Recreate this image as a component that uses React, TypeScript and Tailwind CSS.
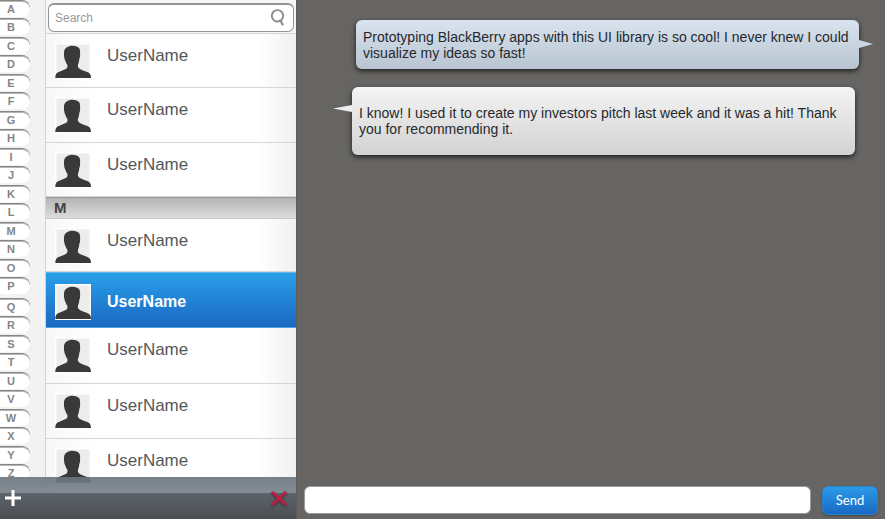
import React, { useState } from 'react';

const letterGroups = ['ABCDEFGHIJKLMNOP', 'QRSTUVWXYZ'];

const Avatar: React.FC<{ selected?: boolean }> = ({ selected }) => (
  <svg
    viewBox="0 0 36 36"
    className={`w-9 h-9 shrink-0 ${selected ? 'mt-[11px]' : 'mt-[9px]'}`}
    aria-hidden="true"
  >
    <rect width="36" height="36" fill="#ffffff" />
    <rect x="1.5" y="1.5" width="33" height="33" fill="#ececec" />
    <path
      d="M17.5 2.800C13 2.800 9.300 5 9 9.200c-.2 1.600 0 3 .1 4.300.2 1.500.5 3 1.200 4.200.5 1.600 1.200 3 2.100 4.200.2 1.800.1 3-1.300 3.900-2.300 1.500-6.300 2.600-8.900 4C.9 30.900.3 32.500.3 35H36c-.1-2.400-.6-4.300-2.200-5.300-2.600-1.400-6.300-2.300-9-3.800-1.500-.9-2-1.800-1.900-3.300 0-1.100.5-2 .9-3.300.3-1 .3-2.200.5-3.400.6-1.100.9-2.500.8-4.200 0-2.100.2-4.500-.7-6.200C23 3.800 20.500 2.800 17.500 2.800z"
      fill="#393939"
    />
  </svg>
);

type ContactProps = {
  selected?: boolean;
  className?: string;
};

const Contact: React.FC<ContactProps> = ({ selected = false, className = 'h-[55px]' }) => (
  <li className={className}>
    <button
      type="button"
      aria-pressed={selected}
      className={`flex w-full h-full items-start gap-4 pl-[9px] text-left border-b ${
        selected
          ? 'bg-linear-to-b from-[#2a9fea] to-[#1b68c1] border-[#4d9fe0] border-t border-t-[#63b3e6] text-white font-bold text-base'
          : 'border-[#d3d6d8] text-[#55585b] text-[17px]'
      }`}
    >
      <Avatar selected={selected} />
      <span className={selected ? 'mt-[19px] leading-5' : 'mt-3 leading-5'}>UserName</span>
    </button>
  </li>
);

const App: React.FC = () => {
  const [search, setSearch] = useState('');
  const [message, setMessage] = useState('');

  return (
    <div className="flex h-screen overflow-hidden bg-[#666563] font-['Liberation_Sans',Arial,sans-serif]">
      <aside className="relative flex w-[296px] shrink-0 overflow-hidden bg-[#f2f2f3]">
        {/* Alphabet index */}
        <nav aria-label="Alphabet" className="flex w-[46px] shrink-0 flex-col gap-[2px] border-r border-[#cfd2d5]">
          {letterGroups.map((group) => (
            <div key={group}>
              {group.split('').map((letter) => (
                <a
                  key={letter}
                  href={`#${letter}`}
                  className="block w-[30px] odd:h-[18px] even:h-[19px]"
                >
                  <span className="block h-[17px] rounded-r-lg border-t border-[#858585] bg-white pr-2 text-center text-[11px] leading-4 font-bold text-[#858585] shadow-[inset_0_1px_0_#b5b5b5]">
                    {letter}
                  </span>
                </a>
              ))}
            </div>
          ))}
        </nav>

        {/* Contacts */}
        <div className="flex-1 min-w-0 bg-linear-to-r from-[#f7f7f8] via-white via-20% to-white">
          <div className="bg-linear-to-r from-transparent from-85% to-[#f0f0f1]">
            <div className="border-b border-[#d3d6d8] bg-[#f6f6f6] px-[2px] pt-[3px] pb-px">
              <div className="flex h-[29px] items-center rounded-md border border-t-2 border-[#929496] bg-white pl-[6px] pr-[7px]">
                <input
                  type="text"
                  aria-label="Search"
                  placeholder="Search"
                  value={search}
                  onChange={(e) => setSearch(e.target.value)}
                  className="min-w-0 flex-1 bg-transparent text-xs text-[#333333] outline-none placeholder:text-[#999999]"
                />
                <svg viewBox="0 0 16 18" className="w-4 h-[18px]" fill="none" stroke="#8b8b8b" aria-hidden="true">
                  <circle cx="7.5" cy="6.800" r="5.700" strokeWidth="1.900" />
                  <path d="M9 11.500l2 1 2 3.700" strokeWidth="2.200" />
                </svg>
              </div>
            </div>
            <ul>
              <Contact className="h-[54px]" />
              <Contact />
              <Contact className="h-[54px]" />
            </ul>
            <h2 className="h-[22px] border-y border-[#c9c9c9] border-t-[#999999] bg-linear-to-b from-[#b5b5b5] to-[#dcdcdc] pl-2 text-[15px] leading-5 font-bold text-[#444444]">
              M
            </h2>
            <ul>
              <Contact className="h-[53px]" />
              <Contact selected className="h-14" />
              <Contact className="h-14" />
              <Contact />
              <Contact />
            </ul>
          </div>
        </div>

        {/* Toolbar */}
        <div className="absolute inset-x-0 bottom-0 flex h-[42px] items-center justify-between bg-linear-to-b from-[#68737e]/90 from-0% via-[#7e868e]/95 via-38% to-[#5c636a] to-38% pl-1 pr-2">
          <div className="absolute inset-x-0 bottom-0 h-[26px] bg-linear-to-b from-[#5c646c] to-[#4b4e51]" />
          <button type="button" aria-label="Add contact" className="relative">
            <svg viewBox="0 0 18 18" className="w-[18px] h-[18px]" stroke="#ffffff" strokeWidth="3">
              <path d="M9 1v16M1 9h16" />
            </svg>
          </button>
          <button type="button" aria-label="Delete contact" className="relative">
            <svg
              viewBox="0 0 18 18"
              className="w-[18px] h-[18px] drop-shadow-[0_1px_1px_#333333]"
              stroke="#bd1e46"
              strokeWidth="3"
            >
              <path d="M2 3l14 13M16 3L2 16" />
            </svg>
          </button>
        </div>
      </aside>

      {/* Conversation */}
      <main className="flex min-w-0 flex-1 flex-col border-l border-[#5c5b5a]">
        <div className="flex-1 pt-5 text-sm leading-4 text-[#26292c]">
          <div className="relative ml-[59px] mr-[26px] flex min-h-[49px] items-center rounded-md bg-linear-to-b from-[#d9e4ef] to-[#b9c4d2] px-[7px] shadow-[0_2px_5px_#1c1c1c]">
            <p>Prototyping BlackBerry apps with this UI library is so cool! I never knew I could visualize my ideas so fast!</p>
            <svg viewBox="0 0 14 8" className="absolute left-full top-5 w-[14px] h-2" aria-hidden="true">
              <path d="M0 0l14 4L0 8z" fill="#cbd8e4" />
            </svg>
          </div>
          <div className="relative mt-[18px] ml-[55px] mr-[30px] flex min-h-[68px] items-center rounded-md bg-linear-to-b from-[#f4f4f4] to-[#d2d2d2] px-[7px] shadow-[0_2px_5px_#1c1c1c]">
            <p>I know! I used it to create my investors pitch last week and it was a hit! Thank you for recommending it.</p>
            <svg viewBox="0 0 19 8" className="absolute right-full top-[17px] w-[19px] h-2" aria-hidden="true">
              <path d="M19 1L0 4.500l19 3.500z" fill="#ededed" />
            </svg>
          </div>
        </div>
        <form className="flex items-start gap-[11px] pb-1 pl-[7px] pr-[7px]" onSubmit={(e) => e.preventDefault()}>
          <input
            type="text"
            aria-label="Message"
            value={message}
            onChange={(e) => setMessage(e.target.value)}
            className="h-7 min-w-0 flex-1 rounded-md border border-[#99989a] bg-white px-2 text-sm outline-none"
          />
          <button
            type="submit"
            className="h-[29px] w-14 rounded-md border border-[#2d83cb] bg-linear-to-b from-[#2c9ae8] to-[#1969c3] font-['Lato',sans-serif] text-[13px] text-white shadow-[0_1px_2px_#444444]"
          >
            Send
          </button>
        </form>
      </main>
    </div>
  );
};

export default App;
